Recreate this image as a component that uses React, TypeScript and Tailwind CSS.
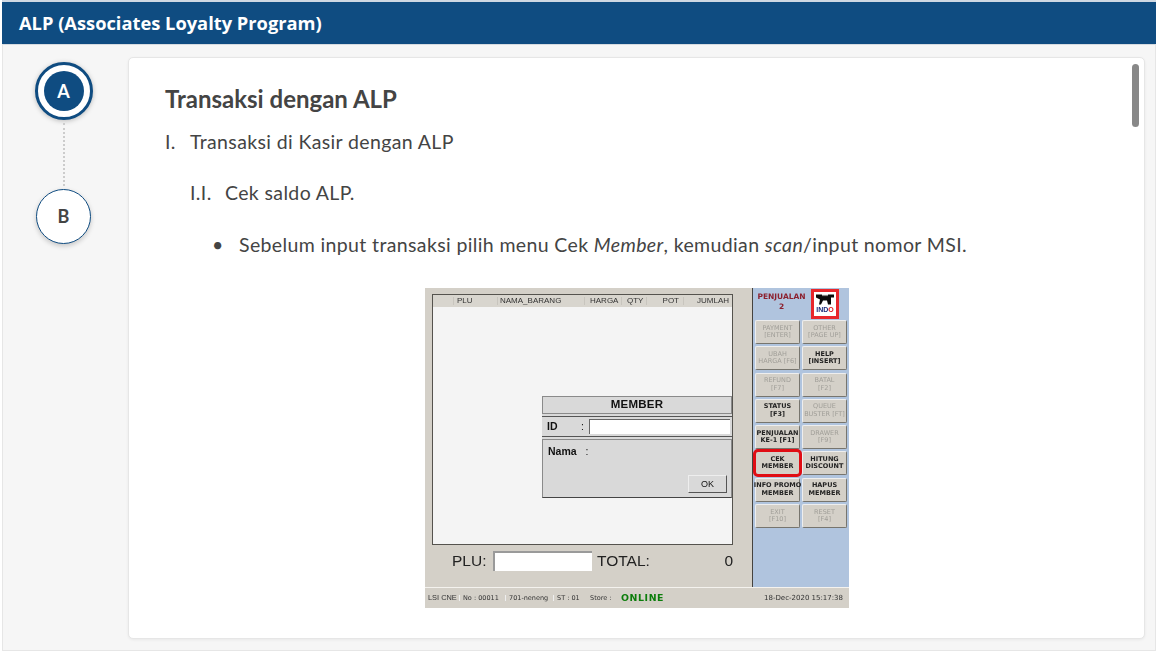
import React from "react";

type Btn = { t: string[]; on?: boolean; red?: boolean };
const buttons: Btn[] = [
  { t: ["PAYMENT", "[ENTER]"] },
  { t: ["OTHER", "[PAGE UP]"] },
  { t: ["UBAH", "HARGA [F6]"] },
  { t: ["HELP", "[INSERT]"], on: true },
  { t: ["REFUND", "[F7]"] },
  { t: ["BATAL", "[F2]"] },
  { t: ["STATUS", "[F3]"], on: true },
  { t: ["QUEUE", "BUSTER [FT]"] },
  { t: ["PENJUALAN", "KE-1 [F1]"], on: true },
  { t: ["DRAWER", "[F9]"] },
  { t: ["CEK", "MEMBER"], on: true, red: true },
  { t: ["HITUNG", "DISCOUNT"], on: true },
  { t: ["INFO PROMO", "MEMBER"], on: true },
  { t: ["HAPUS", "MEMBER"], on: true },
  { t: ["EXIT", "[F10]"] },
  { t: ["RESET", "[F4]"] },
];

function PosButton({ b }: { b: Btn }) {
  return (
    <div className="relative">
      <div
        className={`flex h-[24px] flex-col items-center justify-center rounded-[2px] border border-t-[#eeeeee] border-l-[#eeeeee] border-r-[#77756e] border-b-[#77756e] bg-[#d4d0c8] text-center font-['DejaVu_Sans',sans-serif] text-[6.5px] leading-[7.5px] whitespace-nowrap ${
          b.on ? "font-bold text-[#222222]" : "text-[#a09e98]"
        }`}
      >
        {b.t.map((l) => (
          <span key={l}>{l}</span>
        ))}
      </div>
      {b.red && <div className="absolute -inset-[2px] rounded-[5px] border-[3px] border-[#e00d14]" />}
    </div>
  );
}

function PosScreen() {
  return (
    <div className="flex h-[320px] w-[424px] flex-col bg-[#d4d0c8] font-['Liberation_Sans',sans-serif] blur-[0.3px]">
      <div className="flex h-[299px]">
        <div className="relative flex w-[327px] flex-col pl-[7px] pt-[6px]">
          <div className="flex h-[251px] w-[301px] flex-col border border-[#55534e] bg-[#f4f4f4]">
            <div className="flex h-[12px] items-center bg-[#d8d5ce] text-[8px] leading-none text-[#333333]">
              <span className="w-[21px] border-r border-[#c8c5be]">&nbsp;</span>
              <span className="w-[44px] border-r border-[#c8c5be] pl-[3px]">PLU</span>
              <span className="w-[87px] border-r border-[#c8c5be] pl-[2px] whitespace-nowrap">NAMA_BARANG</span>
              <span className="w-[37px] border-r border-[#c8c5be] pl-[5px]">HARGA</span>
              <span className="w-[25px] border-r border-[#c8c5be] pl-[5px]">QTY</span>
              <span className="w-[37px] border-r border-[#c8c5be] pr-[4px] text-right">POT</span>
              <span className="flex-1 pr-[3px] text-right">JUMLAH</span>
            </div>
          </div>

          <div className="absolute top-[108px] left-[117px] flex h-[102px] w-[190px] flex-col gap-[2px] bg-[#d9d9d9] text-[#111111]">
            <div className="flex h-[18px] items-center justify-center border border-[#8a8a8a] text-[11.5px] leading-none font-bold tracking-[0.2px]">MEMBER</div>
            <div className="flex h-[21px] items-center border-y border-[#555555] pr-[2px] text-[10.5px] font-bold">
              <span className="w-[39px] pl-[5px]">ID</span>
              <span className="w-[8px] font-normal">:</span>
              <div className="h-[15px] flex-1 border-t border-l border-[#666666] bg-white" />
            </div>
            <div className="relative flex flex-1 items-start gap-[9px] border border-b-[#444444] border-[#8a8a8a] px-[5px] pt-[5px] text-[10.5px] leading-[12px] font-bold">
              <span>Nama</span>
              <span className="font-normal">:</span>
              <div className="absolute right-[4px] bottom-[4px] flex h-[18px] w-[39px] items-center justify-center border border-t-[#eeeeee] border-l-[#eeeeee] border-r-[#555555] border-b-[#555555] text-[9px] font-normal">
                OK
              </div>
            </div>
          </div>

          <div className="mt-[5px] flex h-[21px] items-center text-[15.5px] leading-none text-[#222222]">
            <span className="ml-[20px] w-[41px]">PLU:</span>
            <div className="h-[20px] w-[99px] border-t-2 border-l-2 border-t-[#9a9a9a] border-l-[#9a9a9a] bg-white" />
            <span className="ml-[5px]">TOTAL:</span>
            <span className="ml-auto mr-[19px]">0</span>
          </div>
        </div>
        <div className="flex w-[97px] flex-col border-l border-[#45433f] bg-[#b0c4de] pr-[2px] pl-[2px]">
          <div className="flex h-[32px] items-start">
            <div className="w-[53px] pt-[4px] text-center font-['DejaVu_Sans',sans-serif] text-[7.5px] leading-[10px] font-semibold text-[#8c2230]">
              PENJUALAN
              <br />2
            </div>
            <div className="mt-[1px] ml-[3px] flex h-[30px] w-[28px] flex-col items-center border-[3px] border-[#e8262c] bg-white pt-[1px]">
              <svg viewBox="0 0 20 12" className="h-[13px] w-[20px]">
                <path d="M1 1 L7 1 L8 3 L9 1 L10 3 L11 1 L12 3 L13 1 L19 1 L19 4 L16 4 L16 11 L13 11 L12 7 L8 7 L6 11 L4 11 L5 6 L3 5 L1 4 Z" fill="#0a0a0a" />
              </svg>
              <span className="font-['Liberation_Sans',sans-serif] text-[7px] leading-[7px] font-bold text-[#1a2a7a]">
                IND<span className="text-[#e0141b]">O</span>
              </span>
            </div>
          </div>
          <div className="grid grid-cols-2 gap-x-[2px] gap-y-[2.3px]">
            {buttons.map((b) => (
              <PosButton key={b.t.join()} b={b} />
            ))}
          </div>
        </div>
      </div>
      <div className="flex h-[21px] items-center border-t border-[#f4f2ee] pr-[6px] font-['DejaVu_Sans',sans-serif] text-[6.5px] leading-none whitespace-nowrap text-[#333333]">
        <span className="w-[34px] pl-[3px] font-['Liberation_Sans',sans-serif] text-[7.4px]">LSI CNE</span>
        <span className="w-[46px] border-l border-[#eeeeee] pl-[3px]">No : 00011</span>
        <span className="w-[48px] border-l border-[#eeeeee] pl-[3px]">701-neneng</span>
        <span className="w-[33px] border-l border-[#eeeeee] pl-[3px]">ST : 01</span>
        <span className="w-[34px] pl-[4px]">Store :</span>
        <span className="ml-[1px] w-[48px] text-[9.4px] font-bold tracking-[0.6px] text-[#0b7d0b]">ONLINE</span>
        <span className="ml-auto text-[7px]">18-Dec-2020 15:17:38</span>
      </div>
    </div>
  );
}

export default function App() {
  return (
    <div className="flex h-[652px] w-[1158px] flex-col overflow-hidden border-x-2 border-b border-white bg-white font-['Lato',sans-serif] text-[#444444]">
      <header className="flex h-[44px] items-center border-t-2 border-[#cfd8e3] bg-[#0f4c81] pl-[17px] font-['Open_Sans',sans-serif] text-[18.3px] font-bold text-white">
        ALP (Associates Loyalty Program)
      </header>
      <div className="flex flex-1 border border-t-[#d6dbe0] border-[#e6e6e6] bg-[#f6f6f6] pt-[12px] pr-[10px] pb-[11px]">
        <aside className="flex w-[125px] flex-col items-center pt-[5px] pr-[4px]">
          <div className="flex h-[58px] w-[58px] items-center justify-center rounded-full border-[3px] border-[#0f4c81] bg-white shadow-[0_1px_5px_rgba(0,0,0,0.25)]">
            <div className="flex h-[40px] w-[40px] items-center justify-center rounded-full bg-[#0f4c81] text-[18px] font-bold text-white">A</div>
          </div>
          <div className="my-[3px] h-[63px] border-l-2 border-dotted border-[#cccccc]" />
          <div className="flex h-[55px] w-[55px] items-center justify-center rounded-full border border-[#0f4c81] bg-white text-[18px] font-bold shadow-[0_2px_5px_rgba(0,0,0,0.2)]">B</div>
        </aside>
        <main className="relative flex-1 rounded-[5px] border border-[#e6e6e6] bg-white pt-[28px] pl-[36px] shadow-[0_1px_3px_rgba(0,0,0,0.06)]">
          <h1 className="text-[24px] leading-[26px] font-bold text-[#444444]">Transaksi dengan ALP</h1>
          <div className="mt-[19px] flex text-[19.5px] leading-[22px] tracking-[0.37px]">
            <span className="w-[25px]">I.</span>
            <span>Transaksi di Kasir dengan ALP</span>
          </div>
          <div className="mt-[29px] ml-[25px] flex text-[19.5px] leading-[22px] tracking-[0.37px]">
            <span className="w-[35px]">I.I.</span>
            <span>Cek saldo ALP.</span>
          </div>
          <div className="mt-[30px] ml-[47px] flex text-[19.5px] leading-[22px] tracking-[0.37px]">
            <span className="w-[27px]">•</span>
            <span>
              Sebelum input transaksi pilih menu Cek <i>Member</i>, kemudian <i>scan</i>/input nomor MSI.
            </span>
          </div>
          <div className="mt-[32px] ml-[260px]">
            <PosScreen />
          </div>
          <div className="absolute top-[6px] right-[5px] h-[63px] w-[7px] rounded-full bg-[#888888]" />
        </main>
      </div>
    </div>
  );
}
